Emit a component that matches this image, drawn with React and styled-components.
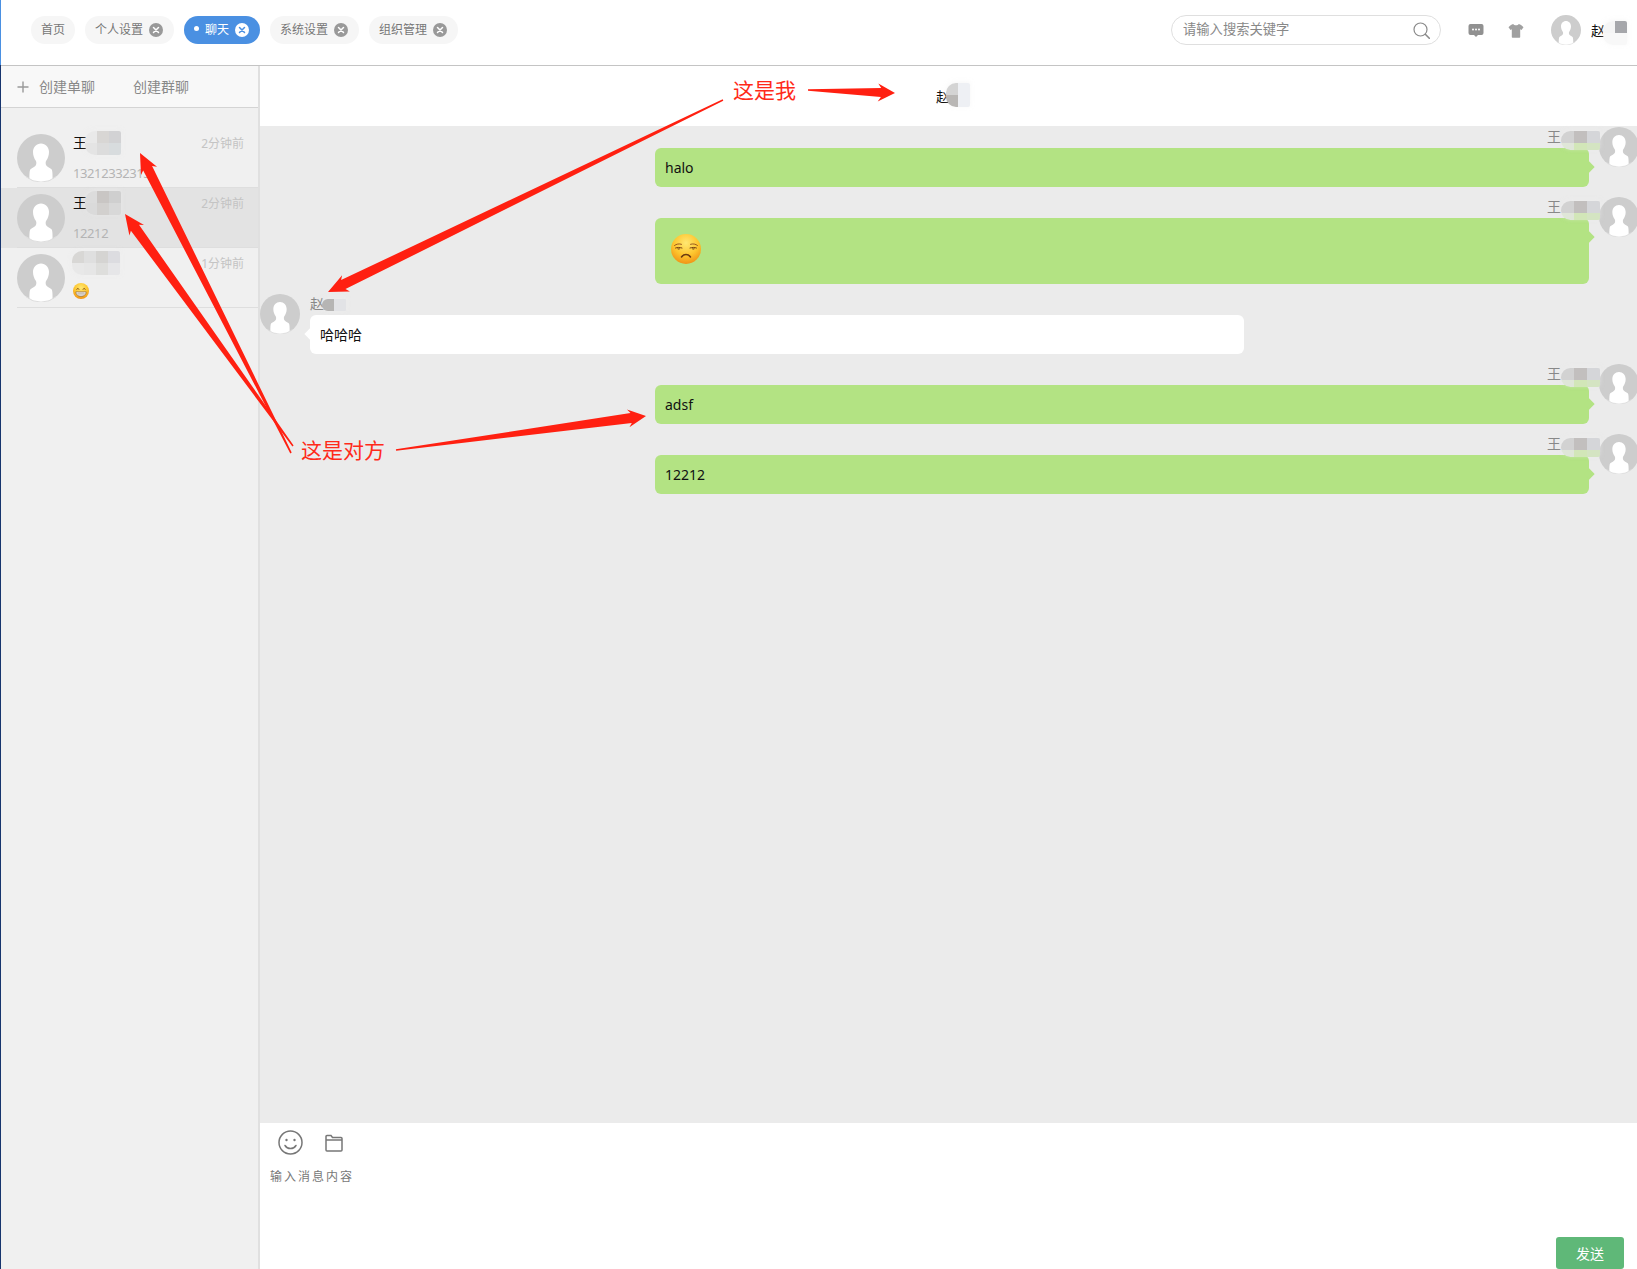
import styled, { createGlobalStyle } from "styled-components";

const GlobalStyle = createGlobalStyle`
  html, body {
    margin: 0;
    padding: 0;
    height: 100%;
    overflow: hidden;
    background: #fff;
    font-family: "Noto Sans", "Noto Sans CJK SC", sans-serif;
  }
  * { box-sizing: border-box; }
`;

const Page = styled.div`
  position: relative;
  display: flex;
  height: 100vh;
  overflow: hidden;
`;
const Stripe = styled.div`
  flex: 0 0 1px;
  background: linear-gradient(to bottom, #4a90e2 0, #4a90e2 65px, #17356e 65px);
`;
const Content = styled.div`
  flex: 1;
  min-width: 0;
  display: flex;
  flex-direction: column;
`;

/* top bar */
const TopBar = styled.header`
  flex: 0 0 66px;
  display: flex;
  justify-content: space-between;
  align-items: flex-start;
  padding: 15px 0 0 30px;
  border-bottom: 1px solid #c4c4c4;
`;
const Tabs = styled.nav`
  display: flex;
  gap: 10px;
  margin-top: 1px;
`;
const Tab = styled.div`
  display: flex;
  align-items: center;
  height: 28px;
  padding: 0 ${(p) => (p.$closable ? "11px" : "10px")} 0 10px;
  border-radius: 14px;
  font-size: 12px;
  line-height: 26px;
  color: ${(p) => (p.$active ? "#fff" : "#777")};
  background: ${(p) => (p.$active ? "#4a90e2" : "#f6f6f6")};
`;
const TabLabel = styled.span`
  margin-top: -1px;
`;
const TabDot = styled.span`
  width: 5px;
  height: 5px;
  margin: 0 6px 3px 0;
  border-radius: 50%;
  background: #fff;
`;
const TabClose = styled.svg`
  width: 14px;
  height: 14px;
  margin-left: 6px;
`;
const TopRight = styled.div`
  display: flex;
  align-items: flex-start;
`;
const Search = styled.div`
  position: relative;
  width: 270px;
  height: 30px;
  margin-right: 27px;
  border: 1px solid #dfdfdf;
  border-radius: 15px;
`;
const SearchInput = styled.input`
  width: 100%;
  height: 100%;
  padding: 0 36px 2px 11px;
  border: 0;
  outline: 0;
  background: transparent;
  font: 13.3px "Noto Sans", "Noto Sans CJK SC", sans-serif;
  &::placeholder { color: #888; opacity: 1; }
`;
const SearchIcon = styled.svg`
  position: absolute;
  right: 10px;
  top: 6px;
  width: 17px;
  height: 17px;
`;
const ToolIcon = styled.svg`
  width: 16px;
  height: 15px;
  margin: 8px 24px 0 0;
`;
const Me = styled.div`
  display: flex;
  align-items: center;
  width: 86px;
  margin-left: 3px;
  font-size: 14px;
  color: #111;
`;
const MeName = styled.span`
  position: relative;
  margin-left: 10px;
`;

/* avatar */
const AvatarSvg = styled.svg`
  flex: none;
  display: block;
  width: ${(p) => p.$size}px;
  height: ${(p) => p.$size}px;
`;
const Avatar = ({ size }) => (
  <AvatarSvg $size={size} viewBox="0 0 48 48">
    <circle cx="24" cy="24" r="24" fill="#cdcdcd" />
    <path
      fill="#fff"
      d="M24 9.500C19.400 9.500 16 13.100 16 18.100C16 21.700 17.200 24.600 18.800 26.700C19.500 27.700 19.500 29.500 19 30.900C18.200 32.800 15.200 33.800 13.500 35.200C12.500 36.100 12.400 40.200 12.400 45A24 24 0 0 0 35.600 45C35.600 40.200 35.500 36.100 34.500 35.200C32.800 33.800 29.800 32.800 29 30.900C28.500 29.500 28.500 27.700 29.200 26.700C30.800 24.600 32 21.700 32 18.100C32 13.100 28.600 9.500 24 9.500Z"
    />
    <path fill="none" stroke="#dedede" strokeWidth="1" d="M9 42.700A23.500 23.500 0 0 0 39 42.700" />
  </AvatarSvg>
);

/* mosaic patches over the hidden part of a name */
const MosaicGrid = styled.span`
  position: absolute;
  left: ${(p) => p.$left}px;
  top: ${(p) => p.$top}px;
  display: grid;
  grid-template-columns: repeat(${(p) => p.$cols}, ${(p) => p.$cell}px);
  grid-auto-rows: 12px;
  height: ${(p) => (p.$height ? `${p.$height}px` : "auto")};
  border-radius: 10px 2px 2px 10px;
  box-shadow: 0 -1px 4px rgba(240, 240, 240, 0.5);
  overflow: hidden;
  z-index: 2;
`;
const MosaicCell = styled.i`
  display: block;
  background: ${(p) => p.$color};
`;
const Mosaic = ({ left, top, cols, cells, cell = 12, height }) => (
  <MosaicGrid $left={left} $top={top} $cols={cols} $cell={cell} $height={height}>
    {cells.map((c, i) => (
      <MosaicCell key={i} $color={c} />
    ))}
  </MosaicGrid>
);

/* sidebar */
const Body = styled.div`
  flex: 1;
  min-height: 0;
  display: flex;
`;
const Sidebar = styled.aside`
  flex: 0 0 259px;
  background: #f0f0f0;
  border-right: 2px solid #e0e0e0;
`;
const SideHead = styled.div`
  display: flex;
  align-items: center;
  height: 42px;
  padding-left: 16px;
  background: #f8f8f8;
  border-bottom: 1px solid #d4d4d4;
  font-size: 14px;
  color: #888;
`;
const PlusIcon = styled.svg`
  width: 12px;
  height: 12px;
  margin-right: 10px;
`;
const SideAction = styled.span`
  margin: -2px 38px 0 0;
`;
const ChatList = styled.div`
  padding-top: 20px;
`;
const ChatItem = styled.div`
  padding-left: 16px;
  background: ${(p) => (p.$active ? "#e3e3e3" : "transparent")};
`;
const ChatInner = styled.div`
  display: flex;
  align-items: flex-start;
  height: 60px;
  padding: 6px 14px 0 0;
  border-bottom: 1px solid #dedede;
`;
const ChatText = styled.div`
  flex: 1;
  min-width: 0;
  margin-left: 8px;
`;
const ChatTop = styled.div`
  display: flex;
  justify-content: space-between;
  height: 20px;
  margin-top: -1px;
  line-height: 20px;
`;
const ChatName = styled.span`
  position: relative;
  font-size: 14px;
  color: #111;
`;
const ChatTime = styled.span`
  margin-top: 1px;
  font-size: 12px;
  color: #c4c4c4;
`;
const ChatSub = styled.div`
  display: flex;
  align-items: center;
  height: 20px;
  margin-top: 10px;
  font-size: 13px;
  letter-spacing: -0.4px;
  color: #b4b4b4;
`;

/* conversation */
const Main = styled.main`
  flex: 1;
  min-width: 0;
  display: flex;
  flex-direction: column;
  overflow: hidden;
`;
const TitleBar = styled.div`
  position: relative;
  flex: 0 0 60px;
  display: flex;
  align-items: center;
  padding: 0 0 0 676px;
  font-size: 14px;
  color: #111;
`;
const TitleName = styled.span`
  position: relative;
`;
const Messages = styled.div`
  flex: 1;
  display: flex;
  flex-direction: column;
  gap: 10px;
  padding-top: 1px;
  background: #ebebeb;
`;
const MsgRow = styled.div`
  display: flex;
  flex-direction: ${(p) => (p.$mine ? "row-reverse" : "row")};
  gap: 10px;
  margin-right: ${(p) => (p.$mine ? "-2px" : "0")};
`;
const MsgBody = styled.div`
  width: 934px;
`;
const MsgName = styled.div`
  display: flex;
  justify-content: ${(p) => (p.$mine ? "flex-end" : "flex-start")};
  height: 21px;
  font-size: 14px;
  line-height: 20px;
  color: #888;
`;
const MsgNameBox = styled.span`
  position: relative;
  width: 42px;
`;
const Bubble = styled.div`
  position: relative;
  min-height: 39px;
  padding: ${(p) => (p.$emoji ? "16px 16px 20px" : "10px")};
  border-radius: 6px;
  background: ${(p) => (p.$mine ? "#b3e383" : "#fff")};
  font-size: 14px;
  line-height: 19px;
  color: #111;
  &::after {
    content: "";
    position: absolute;
    top: 15px;
    ${(p) => (p.$mine ? "right: -4px" : "left: -4px")};
    width: 8px;
    height: 8px;
    transform: rotate(45deg);
    background: inherit;
  }
`;
const BigEmoji = styled.svg`
  display: block;
  width: 30px;
  height: 30px;
`;
const SmallEmoji = styled.svg`
  display: block;
  width: 16px;
  height: 16px;
  margin-top: -4px;
`;

/* composer */
const Composer = styled.div`
  flex: 0 0 146px;
  display: flex;
  flex-direction: column;
  padding: 7px 13px 0 18px;
  background: #fff;
`;
const ComposerTools = styled.div`
  display: flex;
  align-items: center;
  gap: 22px;
`;
const ComposerIcon = styled.svg`
  width: ${(p) => p.$size}px;
  height: ${(p) => p.$size}px;
`;
const ComposerHint = styled.div`
  margin: 13px 0 0 -8px;
  font-size: 12px;
  line-height: 18px;
  letter-spacing: 2px;
  color: #777;
`;
const SendButton = styled.button`
  align-self: flex-end;
  width: 68px;
  height: 32px;
  margin-top: auto;
  padding: 0;
  border: 0;
  border-radius: 3px;
  background: #5fb878;
  color: #fff;
  font: 14px "Noto Sans", "Noto Sans CJK SC", sans-serif;
`;

/* red notes drawn over the screenshot */
const Overlay = styled.svg`
  position: absolute;
  inset: 0;
  width: 100%;
  height: 100%;
  pointer-events: none;
  z-index: 5;
`;
const Note = styled.div`
  position: absolute;
  left: ${(p) => p.$x}px;
  top: ${(p) => p.$y}px;
  font-size: 21px;
  line-height: 24px;
  color: #ff2a1a;
  z-index: 6;
`;

// tapered arrow polygon: thin tail, wide neck, notched head
const arrowPoints = ([x1, y1], [x2, y2], head = 19, wing = 9, neck = 5) => {
  const len = Math.hypot(x2 - x1, y2 - y1);
  const ux = (x2 - x1) / len;
  const uy = (y2 - y1) / len;
  const nx = -uy;
  const ny = ux;
  const at = (back, side) => `${(x2 - ux * back + nx * side).toFixed(1)},${(y2 - uy * back + ny * side).toFixed(1)}`;
  return [
    at(len, -0.8),
    at(len, 0.8),
    at(head - 3, neck),
    at(head, wing),
    `${x2},${y2}`,
    at(head, -wing),
    at(head - 3, -neck),
  ].join(" ");
};

const ARROWS = [
  [[808, 90], [895, 93], 17, 9, 4.5],
  [[723, 100], [328, 292], 20, 9, 5],
  [[291, 453], [140, 153], 20, 9, 5],
  [[293, 446], [125, 214], 20, 9, 5],
  [[396, 450], [646, 416], 18, 9, 5],
];

const CloseGlyph = ({ active }) => (
  <TabClose viewBox="0 0 14 14">
    <circle cx="7" cy="7" r="7" fill={active ? "#fff" : "#999"} />
    <path d="M4.500 4.500l5 5M9.500 4.500l-5 5" stroke={active ? "#4a90e2" : "#fff"} strokeWidth="1.500" strokeLinecap="round" />
  </TabClose>
);

const TABS = [
  { label: "首页" },
  { label: "个人设置", closable: true },
  { label: "聊天", closable: true, active: true },
  { label: "系统设置", closable: true },
  { label: "组织管理", closable: true },
];

const wangCells = ["#d2d2d2", "#c2bfbe", "#d5d6d9", "#dfe6d8", "#d2e6b8", "#d4e4c2"];

const FaceGradient = ({ id }) => (
  <defs>
    <radialGradient id={id} cx="50%" cy="30%" r="75%">
      <stop offset="0" stopColor="#ffe873" />
      <stop offset="0.55" stopColor="#fdc52e" />
      <stop offset="1" stopColor="#ee8a12" />
    </radialGradient>
  </defs>
);

const UnamusedFace = () => (
  <BigEmoji viewBox="0 0 30 30">
    <FaceGradient id="faceBig" />
    <circle cx="15" cy="15" r="15" fill="url(#faceBig)" />
    <path d="M3.500 11.500c2-1.600 4.500-2 7-1.200M19.500 10.300c2.500-.8 5-.4 7 1.200" fill="none" stroke="#9a5a1c" strokeWidth="1" strokeLinecap="round" />
    <path d="M4.500 14c2-.8 4.500-.8 6.500 0M19 14c2-.8 4.500-.8 6.500 0" fill="none" stroke="#7a4414" strokeWidth="1" strokeLinecap="round" />
    <path d="M6 14.500c1 1.400 2.500 1.400 3.500 0M20.500 14.500c1 1.400 2.500 1.400 3.500 0" fill="#5a3210" />
    <path d="M10.500 23c1.200-1.800 2.800-2.600 4.500-2.600s3.300.8 4.500 2.600" fill="none" stroke="#6b3a12" strokeWidth="1.500" strokeLinecap="round" />
  </BigEmoji>
);

const GrinFace = () => (
  <SmallEmoji viewBox="0 0 16 16">
    <FaceGradient id="faceSmall" />
    <circle cx="8" cy="8" r="8" fill="url(#faceSmall)" />
    <path d="M3.800 6.200c.5-1 1.600-1 2.100 0M10.100 6.200c.5-1 1.600-1 2.100 0" fill="none" stroke="#6b3a12" strokeWidth=".9" strokeLinecap="round" />
    <path d="M2.800 8.800h10.400c0 2.800-2.300 4.700-5.200 4.700s-5.200-1.900-5.200-4.700z" fill="#eee" stroke="#8a5a20" strokeWidth=".6" />
    <path d="M3.200 10.800h9.600M6 9v4.200M8 9v4.500M10 9v4.200" stroke="#a89a88" strokeWidth=".5" />
  </SmallEmoji>
);

const App = () => {
  return (
    <>
      <GlobalStyle />
      <Page>
        <Stripe />
        <Content>
          <TopBar>
            <Tabs>
              {TABS.map((t) => (
                <Tab key={t.label} $active={t.active} $closable={t.closable}>
                  {t.active && <TabDot />}
                  <TabLabel>{t.label}</TabLabel>
                  {t.closable && <CloseGlyph active={t.active} />}
                </Tab>
              ))}
            </Tabs>
            <TopRight>
              <Search>
                <SearchInput placeholder="请输入搜索关键字" readOnly />
                <SearchIcon viewBox="0 0 17 17" fill="none" stroke="#8a8a8a" strokeWidth="1.200">
                  <circle cx="7.500" cy="7.500" r="6.500" />
                  <path d="M12.300 12.300l4 4" strokeWidth="1.600" strokeLinecap="round" />
                </SearchIcon>
              </Search>
              <ToolIcon viewBox="0 0 16 15">
                <path fill="#919191" d="M2.500 1h11A2 2 0 0 1 15.500 3v7a2 2 0 0 1-2 2H10l-2 2-2-2H2.500a2 2 0 0 1-2-2V3a2 2 0 0 1 2-2z" />
                <circle cx="5" cy="6.500" r="1" fill="#fff" />
                <circle cx="8" cy="6.500" r="1" fill="#fff" />
                <circle cx="11" cy="6.500" r="1" fill="#fff" />
              </ToolIcon>
              <ToolIcon viewBox="0 0 16 15">
                <path fill="#a0a0a0" d="M5.200 1C6 2.700 10 2.700 10.800 1c1.800.6 3.500 1.700 4.700 3.200l-2 2.800-1.300-.7v7.700a.7.700 0 0 1-.7.700H4.500a.7.700 0 0 1-.7-.7V6.300l-1.300.7-2-2.800C1.700 2.700 3.400 1.600 5.200 1z" />
              </ToolIcon>
              <Me>
                <Avatar size={30} />
                <MeName>
                  赵
                  <Mosaic left={12} top={1} cols={2} cells={["#f5f5f5", "#a6a7ab", "#f8f8f8", "#f8f8f8"]} />
                </MeName>
              </Me>
            </TopRight>
          </TopBar>
          <Body>
            <Sidebar>
              <SideHead>
                <PlusIcon viewBox="0 0 12 12">
                  <path d="M6 .5v11M.5 6h11" stroke="#999" strokeWidth="1.400" />
                </PlusIcon>
                <SideAction>创建单聊</SideAction>
                <SideAction>创建群聊</SideAction>
              </SideHead>
              <ChatList>
                <ChatItem>
                  <ChatInner>
                    <Avatar size={48} />
                    <ChatText>
                      <ChatTop>
                        <ChatName>
                          王
                          <Mosaic left={12} top={-2} cols={3} cells={["#e9e9e9", "#d8d6d4", "#d2d2d4", "#e4e4e4", "#dcdcdc", "#d8dcde"]} />
                        </ChatName>
                        <ChatTime>2分钟前</ChatTime>
                      </ChatTop>
                      <ChatSub>13212332313</ChatSub>
                    </ChatText>
                  </ChatInner>
                </ChatItem>
                <ChatItem $active>
                  <ChatInner>
                    <Avatar size={48} />
                    <ChatText>
                      <ChatTop>
                        <ChatName>
                          王
                          <Mosaic left={12} top={-2} cols={3} cells={["#dcdcdc", "#c9c6c4", "#cfcfcf", "#dadada", "#d2d0ce", "#d8d8d8"]} />
                        </ChatName>
                        <ChatTime>2分钟前</ChatTime>
                      </ChatTop>
                      <ChatSub>12212</ChatSub>
                    </ChatText>
                  </ChatInner>
                </ChatItem>
                <ChatItem>
                  <ChatInner>
                    <Avatar size={48} />
                    <ChatText>
                      <ChatTop>
                        <ChatName>
                          &nbsp;
                          <Mosaic left={-1} top={-2} cols={4} cells={["#d8d7d5", "#dfdfdf", "#d5d4d2", "#dcdce0", "#e8e8e8", "#e6e6e6", "#dededc", "#e6e6e8"]} />
                        </ChatName>
                        <ChatTime>1分钟前</ChatTime>
                      </ChatTop>
                      <ChatSub>
                        <GrinFace />
                      </ChatSub>
                    </ChatText>
                  </ChatInner>
                </ChatItem>
              </ChatList>
            </Sidebar>
            <Main>
              <TitleBar>
                <TitleName>
                  赵
                  <Mosaic left={10} top={-3} cols={2} cells={["#d4d4d4", "#eef0f4", "#b9b7b5", "#eef0f4"]} />
                </TitleName>
              </TitleBar>
              <Messages>
                <MsgRow $mine>
                  <Avatar size={40} />
                  <MsgBody>
                    <MsgName $mine>
                      <MsgNameBox>
                        王
                        <Mosaic left={14} top={4} cols={3} cell={13} height={19} cells={wangCells} />
                      </MsgNameBox>
                    </MsgName>
                    <Bubble $mine>halo</Bubble>
                  </MsgBody>
                </MsgRow>
                <MsgRow $mine>
                  <Avatar size={40} />
                  <MsgBody>
                    <MsgName $mine>
                      <MsgNameBox>
                        王
                        <Mosaic left={14} top={4} cols={3} cell={13} height={19} cells={wangCells} />
                      </MsgNameBox>
                    </MsgName>
                    <Bubble $mine $emoji>
                      <UnamusedFace />
                    </Bubble>
                  </MsgBody>
                </MsgRow>
                <MsgRow>
                  <Avatar size={40} />
                  <MsgBody>
                    <MsgName>
                      <MsgNameBox>
                        赵
                        <Mosaic left={12} top={5} cols={2} cells={["#b6b5b4", "#e2e3e6"]} />
                      </MsgNameBox>
                    </MsgName>
                    <Bubble>哈哈哈</Bubble>
                  </MsgBody>
                </MsgRow>
                <MsgRow $mine>
                  <Avatar size={40} />
                  <MsgBody>
                    <MsgName $mine>
                      <MsgNameBox>
                        王
                        <Mosaic left={14} top={4} cols={3} cell={13} height={19} cells={wangCells} />
                      </MsgNameBox>
                    </MsgName>
                    <Bubble $mine>adsf</Bubble>
                  </MsgBody>
                </MsgRow>
                <MsgRow $mine>
                  <Avatar size={40} />
                  <MsgBody>
                    <MsgName $mine>
                      <MsgNameBox>
                        王
                        <Mosaic left={14} top={4} cols={3} cell={13} height={19} cells={wangCells} />
                      </MsgNameBox>
                    </MsgName>
                    <Bubble $mine>12212</Bubble>
                  </MsgBody>
                </MsgRow>
              </Messages>
              <Composer>
                <ComposerTools>
                  <ComposerIcon $size={25} viewBox="0 0 25 25" fill="none" stroke="#777" strokeWidth="1.500">
                    <circle cx="12.500" cy="12.500" r="11.500" />
                    <circle cx="8.500" cy="10" r="1.200" fill="#777" stroke="none" />
                    <circle cx="16.500" cy="10" r="1.200" fill="#777" stroke="none" />
                    <path d="M7 15.500c1.200 2 3.300 3 5.500 3s4.300-1 5.500-3" strokeLinecap="round" />
                  </ComposerIcon>
                  <ComposerIcon $size={18} viewBox="0 0 18 18" fill="none" stroke="#777" strokeWidth="1.500">
                    <path d="M1 4V2.500A1 1 0 0 1 2 1.500h4l1.500 2H16a1 1 0 0 1 1 1V16a1 1 0 0 1-1 1H2a1 1 0 0 1-1-1z" />
                    <path d="M1 6h16" />
                  </ComposerIcon>
                </ComposerTools>
                <ComposerHint>输入消息内容</ComposerHint>
                <SendButton>发送</SendButton>
              </Composer>
            </Main>
          </Body>
        </Content>
        <Overlay viewBox="0 0 1637 1269">
          {ARROWS.map(([from, to, head, wing, neck], i) => (
            <polygon key={i} points={arrowPoints(from, to, head, wing, neck)} fill="#ff2011" />
          ))}
        </Overlay>
        <Note $x={733} $y={78}>这是我</Note>
        <Note $x={301} $y={438}>这是对方</Note>
      </Page>
    </>
  );
};

export default App;
